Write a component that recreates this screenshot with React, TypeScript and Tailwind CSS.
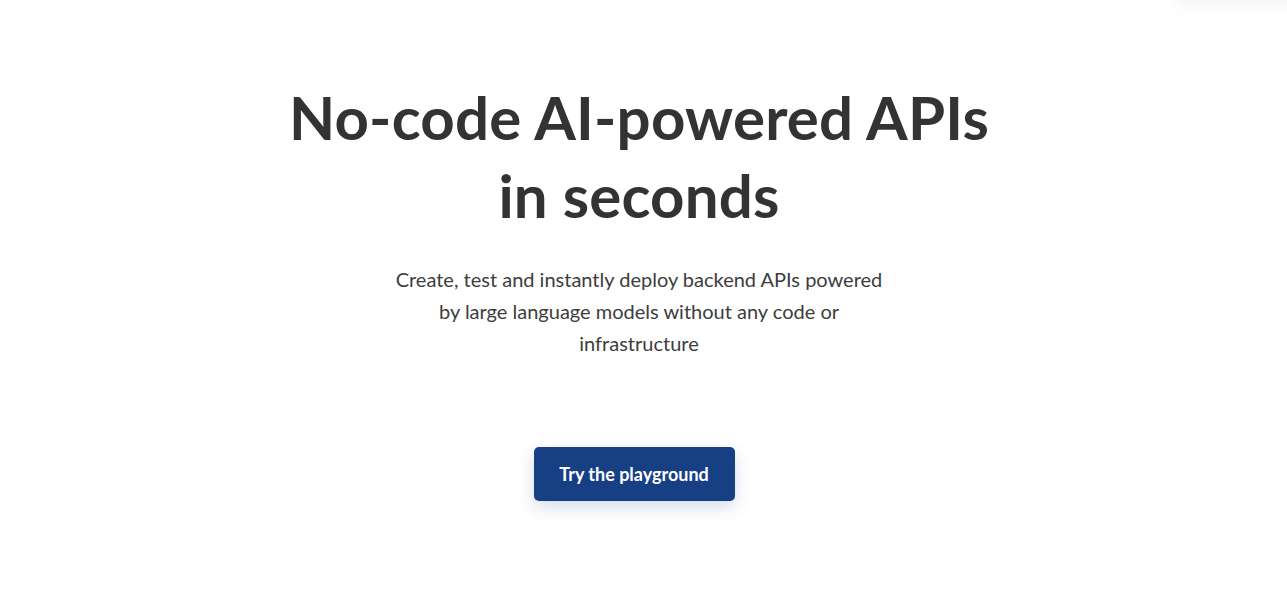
export default function App() {
  return (
    <div className="relative min-h-screen overflow-hidden bg-white font-['Lato',sans-serif] text-[#333333]">
      {/* header shadow peeking in from the top right */}
      <div className="absolute -top-10 right-[-60px] h-10 w-[170px] shadow-[0_4px_20px_rgba(0,0,0,0.06)]" />

      <section className="flex flex-col items-center pl-6 pr-[33px] pt-[78px] text-center">
        <h1 className="text-[60px] font-bold leading-[78px] tracking-[0.2px]">
          No-code AI-powered APIs
          <br />
          in seconds
        </h1>
        <p className="mt-[29px] max-w-[500px] text-[20px] leading-[32px] text-[#3d3d3d]">
          Create, test and instantly deploy backend APIs powered by large language models without any code or
          infrastructure
        </p>
        <button className="mr-[10px] mt-[88px] h-[54px] w-[201px] rounded-[5px] bg-[#163f84] text-[18px] font-bold text-white shadow-[0_6px_16px_rgba(22,63,132,0.18)]">
          Try the playground
        </button>
      </section>
    </div>
  );
}
